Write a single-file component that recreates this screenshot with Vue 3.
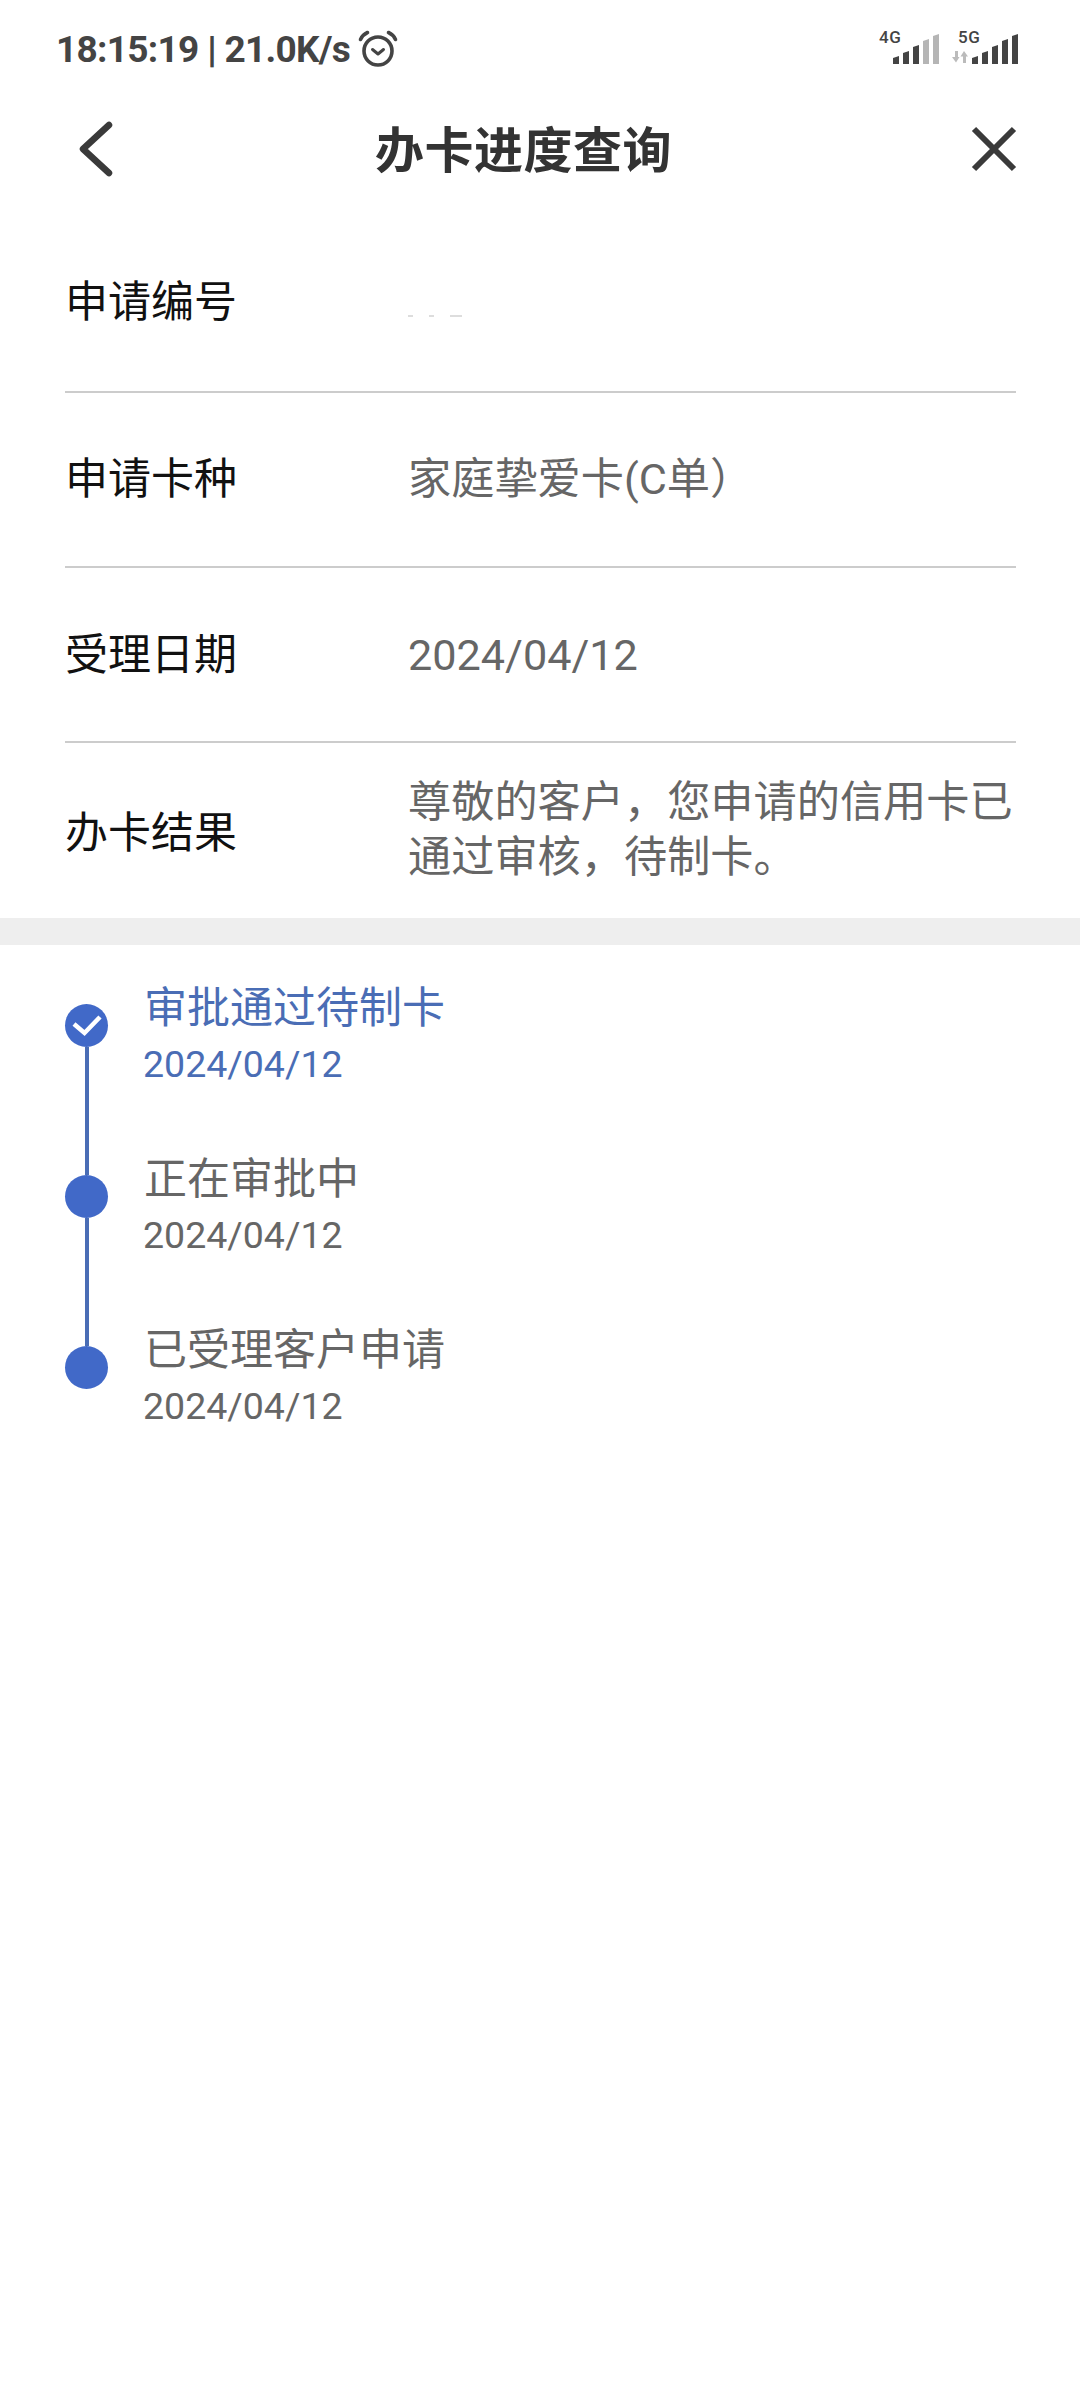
<template>
  <div class="page">
    <div class="status-bar">
      <div class="status-left">
        <span class="status-text">18:15:19 <b class="sep">|</b> 21.0K/s</span>
        <svg class="alarm" width="40" height="37" viewBox="0 0 40 37" fill="none" stroke="#444" stroke-linecap="round">
          <circle cx="20" cy="21" r="14" stroke-width="3.6" />
          <path d="M14.5 19.5l5.500 4.500 5.500-4.500" stroke-width="3" stroke-linejoin="round" />
          <path d="M2.500 9.500C4 6 6.500 3.800 9.500 2.500M37.500 9.500C36 6 33.500 3.800 30.500 2.500" stroke-width="3.6" />
        </svg>
      </div>
      <div class="signals">
        <div class="signal four">
          <span class="net">4G</span>
          <svg width="46" height="30" viewBox="0 0 46 30">
            <path v-for="(d, i) in barPaths" :key="i" :d="d" :fill="i > 2 ? '#b5b5b5' : '#444'" />
          </svg>
        </div>
        <div class="signal five">
          <span class="net">5G</span>
          <svg class="updown" width="16" height="12" viewBox="0 0 16 12" fill="#bbb">
            <path d="M0 6h3V0h3v6h1.500l-3.500 5.500zM8.500 5.500L12 0l4 5.500h-2V12h-3V5.500z" />
          </svg>
          <svg width="46" height="30" viewBox="0 0 46 30">
            <path v-for="(d, i) in barPaths" :key="i" :d="d" fill="#444" />
          </svg>
        </div>
      </div>
    </div>

    <header class="nav">
      <svg width="36" height="56" viewBox="0 0 36 56" fill="none" stroke="#3a3a3a" stroke-width="6.500" stroke-linecap="round" stroke-linejoin="round">
        <path d="M31 4L5 28l26 24" />
      </svg>
      <h1 class="nav-title">办卡进度查询</h1>
      <svg width="46" height="46" viewBox="0 0 46 46" fill="none" stroke="#3a3a3a" stroke-width="6" stroke-linecap="butt">
        <path d="M3 3l40 40M43 3L3 43" />
      </svg>
    </header>

    <section class="info">
      <div v-for="row in rows" :key="row.label" class="row">
        <span class="label">{{ row.label }}</span>
        <span v-if="row.value" class="value">{{ row.value }}</span>
        <span v-else class="specks"><i></i><i></i><i></i></span>
      </div>
    </section>

    <div class="band"></div>

    <section class="timeline">
      <div v-for="(step, i) in steps" :key="step.title" class="step" :class="{ active: i === 0 }">
        <div class="marker">
          <div class="dot">
            <svg v-if="i === 0" width="32" height="24" viewBox="0 0 32 24" fill="none" stroke="#fff" stroke-width="4.500" stroke-linejoin="miter">
              <path d="M3 10l10.500 9L29 3" />
            </svg>
          </div>
          <div v-if="i < steps.length - 1" class="line"></div>
        </div>
        <div class="step-text">
          <div class="step-title">{{ step.title }}</div>
          <div class="step-date">{{ step.date }}</div>
        </div>
      </div>
    </section>
  </div>
</template>

<script setup>
// signal bars rise left to right, each with a slanted top
const barPaths = [
  'M0 24l6-2v8H0z',
  'M10 19l6-2v13h-6z',
  'M20 13l6-2v19h-6z',
  'M30 7l6-2v25h-6z',
  'M40 2l6-2v30h-6z',
]

const rows = [
  { label: '申请编号', value: '' },
  { label: '申请卡种', value: '家庭挚爱卡(C单）' },
  { label: '受理日期', value: '2024/04/12' },
  { label: '办卡结果', value: '尊敬的客户，您申请的信用卡已通过审核，待制卡。' },
]

const steps = [
  { title: '审批通过待制卡', date: '2024/04/12' },
  { title: '正在审批中', date: '2024/04/12' },
  { title: '已受理客户申请', date: '2024/04/12' },
]
</script>

<style>
html,
body {
  background: #fff;
}
</style>

<style scoped>
.page {
  width: 1080px;
  height: 2400px;
  background: #fff;
  overflow: hidden;
  font-family: Roboto, "Noto Sans CJK SC", sans-serif;
}

.status-bar {
  height: 98px;
  padding: 0 62px 0 56px;
  display: flex;
  justify-content: space-between;
  align-items: center;
  box-sizing: border-box;
}

.status-left {
  display: flex;
  align-items: center;
  gap: 8px;
}

.status-text {
  font-size: 37px;
  font-weight: 700;
  letter-spacing: -0.7px;
  color: #444;
}

.sep {
  font-weight: 900;
}

.alarm {
  margin-top: -1px;
}

.signals {
  display: flex;
  gap: 13px;
}

.signal {
  position: relative;
  display: flex;
  align-items: flex-end;
  gap: 4px;
  height: 30px;
}

.signal.four {
  padding-left: 14px;
}

.net {
  position: absolute;
  top: -6px;
  font-size: 17px;
  line-height: 18px;
  font-weight: 500;
  letter-spacing: 0.5px;
  color: #444;
}

.four .net {
  left: 0;
}

.five .net {
  left: 6px;
}

.updown {
  margin-bottom: 1px;
}

.nav {
  height: 102px;
  padding: 0 63px 0 78px;
  display: flex;
  justify-content: space-between;
  align-items: center;
  box-sizing: border-box;
}

.nav-title {
  margin: -6px 38px 0 0;
  font-size: 49px;
  font-weight: 700;
  color: #333;
  letter-spacing: 0.5px;
}

.info {
  padding: 18px 64px 0 65px;
}

.row {
  height: 175px;
  display: flex;
  align-items: center;
  border-bottom: 2px solid #ccc;
  box-sizing: border-box;
  padding-bottom: 4px;
}

.row:nth-child(2) {
  padding-bottom: 1px;
}

.row:nth-child(3) {
  padding-bottom: 0;
  padding-top: 2px;
}

.row:last-child {
  border-bottom: 0;
  padding-bottom: 0;
  padding-top: 6px;
}

.row:last-child .value {
  margin-top: -8px;
}

.label {
  width: 343px;
  flex: none;
  font-size: 43px;
  line-height: 55px;
  color: #111;
}

.value {
  font-size: 43.2px;
  line-height: 55px;
  color: #666;
}

.specks {
  display: flex;
  align-items: center;
  gap: 16px;
  margin-top: 26px;
}

.specks i {
  width: 5px;
  height: 2px;
  background: #ddd;
}

.specks i:last-child {
  width: 12px;
}

.band {
  height: 27px;
  background: #eee;
}

.timeline {
  padding: 59px 0 0 65px;
}

.step {
  display: flex;
  height: 171px;
}

.marker {
  width: 43px;
  flex: none;
  display: flex;
  flex-direction: column;
  align-items: center;
}

.dot {
  width: 43px;
  height: 43px;
  flex: none;
  border-radius: 50%;
  background: #4169c8;
  display: flex;
  align-items: center;
  justify-content: center;
}

.line {
  width: 4px;
  flex: 1;
  margin-left: 1px;
  background: #4a6db5;
}

.step-text {
  margin: -21px 0 0 35px;
}

.step-title {
  font-size: 43px;
  line-height: 50px;
  margin-left: 1px;
  color: #666;
}

.step-date {
  font-size: 37.5px;
  line-height: 44px;
  margin-top: 9px;
  color: #666;
}

.active .step-title,
.active .step-date {
  color: #4a6db5;
}
</style>
